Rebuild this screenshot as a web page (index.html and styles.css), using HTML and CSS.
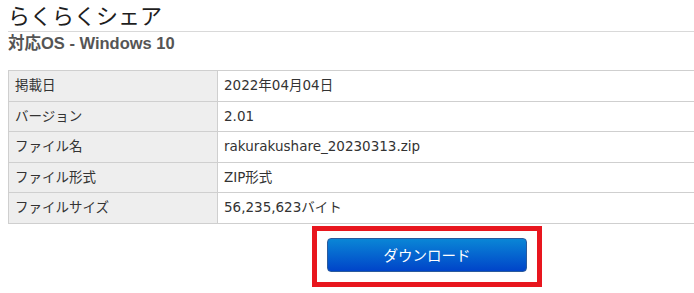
FILE: index.html
```html
<!DOCTYPE html>
<html lang="ja">
<head>
    <meta charset="UTF-8">
    <title>らくらくシェア - ダウンロード</title>
    <link rel="stylesheet" href="styles.css">
</head>
<body>

<div class="page">
    <!-- Title -->
    <h1 class="title">らくらくシェア</h1>
    <h2 class="os">対応OS - Windows 10</h2>

    <!-- File info -->
    <table class="info">
        <tr><th>掲載日</th><td>2022年04月04日</td></tr>
        <tr><th>バージョン</th><td>2.01</td></tr>
        <tr><th>ファイル名</th><td>rakurakushare_20230313.zip</td></tr>
        <tr><th>ファイル形式</th><td>ZIP形式</td></tr>
        <tr><th>ファイルサイズ</th><td>56,235,623バイト</td></tr>
    </table>

    <!-- Download button -->
    <div class="download">
        <span class="mark">
            <button class="btn">ダウンロード</button>
        </span>
    </div>
</div>

</body>
</html>
```

FILE: styles.css
```css
body {
    margin: 0 0 0 8px;
    background-color: #fff;
    color: #333;
    font-family: 'DejaVu Sans', 'Noto Sans CJK JP', sans-serif;
}
.title {
    margin: 0;
    padding-top: 2px;
    font-size: 22px;
    line-height: 29px;
    font-weight: normal;
    color: #1e1e1e;
    font-family: 'Liberation Sans', 'Noto Sans CJK JP', sans-serif;
    border-bottom: 1px solid #d9d9d9;
}
.os {
    margin: 0;
    font-size: 16.5px;
    line-height: 22px;
    font-weight: bold;
    color: #555;
    font-family: 'Liberation Sans', 'Noto Sans CJK JP', sans-serif;
}
.info {
    width: 100%;
    margin-top: 16px;
    border-collapse: collapse;
    table-layout: fixed;
    font-size: 13.5px;
}
.info th,
.info td {
    border: 1px solid #cfcfcf;
    padding: 6px 6px;
    line-height: 17.6px;
    text-align: left;
    font-weight: normal;
}
.info td {
    border-right: none;
}
.info th {
    width: 196px;
    background-color: #eee;
}
.download {
    margin-top: 2px;
    padding-left: 152px;
    text-align: center;
}
.mark {
    display: inline-block;
    border: 5px solid #e8161e;
    padding: 7px 10px 10px;
}
.btn {
    display: block;
    width: 200px;
    height: 34px;
    border: 1px solid #2a5a9c;
    border-radius: 4px;
    background: linear-gradient(#0a86d6, #0044c9);
    color: #fff;
    font-size: 14.5px;
    font-family: 'DejaVu Sans', 'Noto Sans CJK JP', sans-serif;
    cursor: pointer;
}
```
